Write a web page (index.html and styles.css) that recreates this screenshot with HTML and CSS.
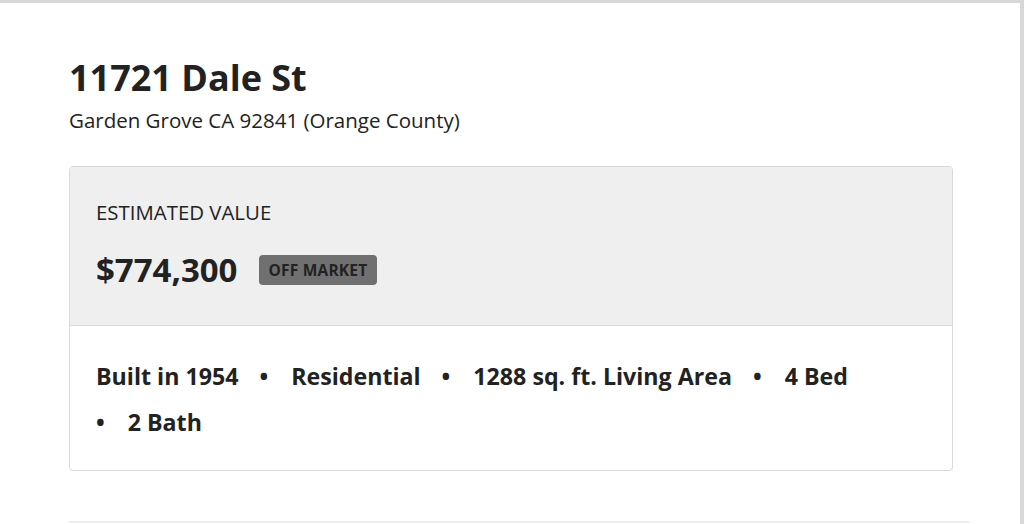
FILE: index.html
```html
<!DOCTYPE html>
<html lang="en">
<head>
<meta charset="utf-8">
<title>11721 Dale St</title>
<link rel="stylesheet" href="styles.css">
</head>
<body>
<div class="frame">
  <div class="content">
    <h1 class="title">11721 Dale St</h1>
    <p class="subtitle">Garden Grove CA 92841 (Orange County)</p>
    <section class="card">
      <div class="card-head">
        <div class="label">ESTIMATED VALUE</div>
        <div class="value-row">
          <span class="value">$774,300</span>
          <span class="badge">OFF MARKET</span>
        </div>
      </div>
      <ul class="facts">
        <li class="fact">Built in 1954</li>
        <li class="fact">Residential</li>
        <li class="fact">1288 sq. ft. Living Area</li>
        <li class="fact">4 Bed</li>
        <li class="fact">2 Bath</li>
      </ul>
    </section>
    <hr class="rule">
  </div>
</div>
</body>
</html>
```

FILE: styles.css
```css
html, body {
  margin: 0;
  padding: 0;
  background: #fff;
}
body {
  font-family: "Open Sans", "Liberation Sans", sans-serif;
  color: #222;
}
.frame {
  height: 524px;
  width: 1024px;
  border-top: 3px solid #d8d8d8;
  border-right: 4px solid #d8d8d8;
  box-sizing: border-box;
  overflow: hidden;
}
.content {
  width: 900px;
  margin-left: 69px;
  padding-top: 50px;
}
.title {
  margin: 0;
  font-size: 36px;
  font-weight: 700;
  line-height: 49px;
}
.subtitle {
  margin: 5px 0 0;
  font-size: 20.5px;
  line-height: 27px;
}
.card {
  margin-top: 32px;
  width: 884px;
  box-sizing: border-box;
  border: 1px solid #d9d9d9;
  border-radius: 4px;
  overflow: hidden;
}
.card-head {
  background: #efefef;
  border-bottom: 1px solid #d9d9d9;
  padding: 32px 26px 37px;
}
.label {
  font-size: 20.4px;
  line-height: 27px;
}
.value-row {
  display: flex;
  align-items: center;
  gap: 21px;
  margin-top: 26px;
}
.value {
  font-size: 33px;
  font-weight: 700;
  line-height: 36px;
}
.badge {
  background: #707070;
  color: #222;
  font-size: 15.5px;
  font-weight: 700;
  letter-spacing: 0.2px;
  line-height: 30px;
  padding: 0 10px;
  border-radius: 4px;
}
.facts {
  list-style: none;
  margin: 0;
  padding: 27px 26px 25px;
  display: flex;
  flex-wrap: wrap;
  column-gap: 21px;
  font-size: 23.2px;
  font-weight: 700;
  line-height: 46px;
}
.fact + .fact::before {
  content: "\2022";
  margin-right: 23px;
}
.rule {
  margin: 50px 0 0;
  border: 0;
  border-top: 2px solid #eeeeee;
  width: 900px;
}
```
